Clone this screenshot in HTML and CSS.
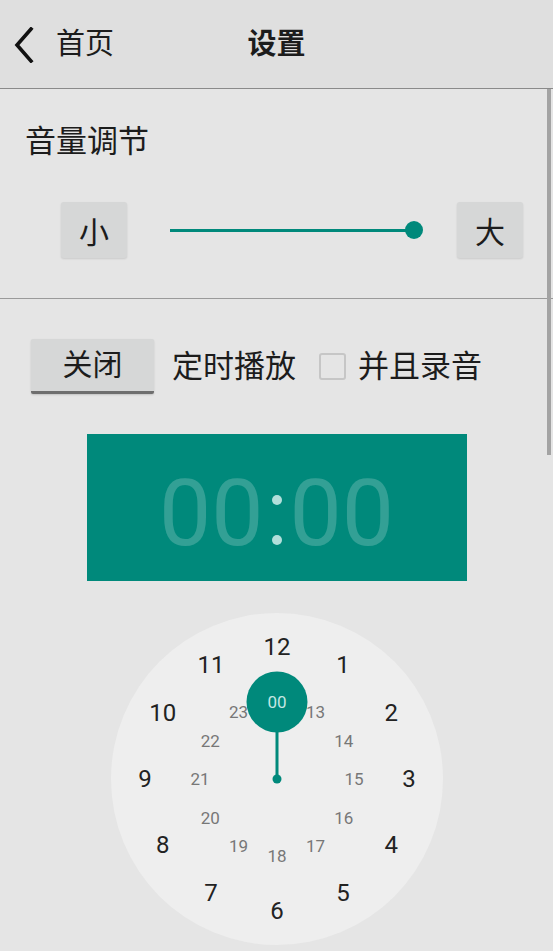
FILE: index.html
```html
<!DOCTYPE html>
<html lang="zh-CN">
<head>
  <meta charset="UTF-8">
  <meta name="viewport" content="width=device-width, initial-scale=1.0">
  <title>设置</title>
  <link rel="stylesheet" href="styles.css">
</head>
<body>
  <header class="toolbar">
    <div class="toolbar-left">
      <svg class="back-icon" width="20" height="36" viewBox="0 0 20 36">
        <path d="M17 2 L3 18 L17 34" fill="none" stroke="#111" stroke-width="3.6" stroke-linecap="square"/>
      </svg>
      <span class="back-label">首页</span>
    </div>
    <h1 class="toolbar-title">设置</h1>
    <div></div>
  </header>

  <section class="volume">
    <h2 class="section-title">音量调节</h2>
    <div class="volume-row">
      <button class="flat-btn">小</button>
      <div class="slider">
        <div class="slider-track"></div>
        <div class="slider-thumb"></div>
      </div>
      <button class="flat-btn">大</button>
    </div>
  </section>

  <section class="timer">
    <div class="timer-row">
      <button class="toggle-btn">关闭</button>
      <span class="row-label">定时播放</span>
      <span class="checkbox"></span>
      <span class="row-label">并且录音</span>
    </div>

    <div class="time-display">
      <span class="digits">00</span>
      <span class="colon"><i></i><i></i></span>
      <span class="digits">00</span>
    </div>

    <svg class="dial" width="332" height="332" viewBox="0 0 332 332">
      <circle cx="166" cy="166" r="166" fill="#eeeeee"/>
      <line x1="166" y1="166" x2="166" y2="115" stroke="#00897b" stroke-width="3"/>
      <circle cx="166" cy="166" r="4.5" fill="#00897b"/>
      <circle cx="166" cy="89" r="30.5" fill="#00897b"/>
      <g class="hour-outer">
        <text x="166" y="34">12</text>
        <text x="232" y="51.7">1</text>
        <text x="280.3" y="100">2</text>
        <text x="298" y="166">3</text>
        <text x="280.3" y="232">4</text>
        <text x="232" y="280.3">5</text>
        <text x="166" y="298">6</text>
        <text x="100" y="280.3">7</text>
        <text x="51.7" y="232">8</text>
        <text x="34" y="166">9</text>
        <text x="51.7" y="100">10</text>
        <text x="100" y="51.7">11</text>
      </g>
      <g class="hour-inner">
        <text x="204.5" y="99.3">13</text>
        <text x="232.7" y="127.5">14</text>
        <text x="243" y="166">15</text>
        <text x="232.7" y="204.5">16</text>
        <text x="204.5" y="232.7">17</text>
        <text x="166" y="243">18</text>
        <text x="127.5" y="232.7">19</text>
        <text x="99.3" y="204.5">20</text>
        <text x="89" y="166">21</text>
        <text x="99.3" y="127.5">22</text>
        <text x="127.5" y="99.3">23</text>
        <text class="selected" x="166" y="89">00</text>
      </g>
    </svg>
  </section>

  <div class="scroll-indicator"></div>
</body>
</html>
```

FILE: styles.css
```css
:root {
  --teal: #00897b;
  --bg: #e5e5e5;
  --bar-bg: #dfdfdf;
  --btn-bg: #d6d7d7;
  --text: #1c1c1c;
}

html, body {
  margin: 0;
  padding: 0;
  height: 951px;
  overflow: hidden;
}

body {
  position: relative;
  background-color: var(--bg);
  color: var(--text);
  font-family: Roboto, "Noto Sans CJK SC", sans-serif;
}

.toolbar {
  display: grid;
  grid-template-columns: 1fr auto 1fr;
  align-items: center;
  height: 88px;
  background-color: var(--bar-bg);
  border-bottom: 1px solid #8a8a8a;
}

.toolbar-left {
  display: flex;
  align-items: center;
  padding-left: 14px;
}

.back-icon {
  display: block;
  margin-top: 2px;
}

.back-label {
  margin-left: 22px;
  font-size: 29px;
  line-height: 36px;
}

.toolbar-title {
  margin: 0;
  font-size: 29px;
  font-weight: bold;
  line-height: 36px;
}

.volume {
  padding-top: 35px;
  padding-bottom: 40px;
  border-bottom: 1px solid #9a9a9a;
}

.section-title {
  margin: 0;
  padding-left: 25px;
  font-size: 31px;
  font-weight: normal;
  line-height: 36px;
}

.volume-row {
  display: flex;
  align-items: center;
  margin-top: 42px;
  padding: 0 30px 0 61px;
}

.flat-btn {
  width: 66px;
  height: 56px;
  padding: 0;
  border: none;
  border-radius: 3px;
  background-color: var(--btn-bg);
  box-shadow: 0 1px 2px rgba(0, 0, 0, 0.12);
  color: var(--text);
  font-family: inherit;
  font-size: 30px;
}

.slider {
  position: relative;
  flex: 1;
  margin: 0 43px;
  height: 20px;
  display: flex;
  align-items: center;
}

.slider-track {
  width: 100%;
  height: 3px;
  background-color: var(--teal);
}

.slider-thumb {
  position: absolute;
  right: -9px;
  top: 1px;
  width: 18px;
  height: 18px;
  border-radius: 50%;
  background-color: var(--teal);
}

.timer {
  padding-top: 40px;
}

.timer-row {
  display: flex;
  align-items: center;
  padding-left: 31px;
}

.toggle-btn {
  width: 123px;
  height: 55px;
  padding: 0;
  border: none;
  border-bottom: 3px solid #6e6e6e;
  border-radius: 2px;
  background-color: var(--btn-bg);
  box-shadow: 0 1px 2px rgba(0, 0, 0, 0.15);
  color: var(--text);
  font-family: inherit;
  font-size: 30px;
  line-height: 36px;
}

.row-label {
  font-size: 31px;
  line-height: 36px;
  margin-left: 18px;
}

.checkbox {
  box-sizing: border-box;
  width: 27px;
  height: 27px;
  margin-left: 23px;
  margin-right: -6px;
  border: 2px solid #c6c6c6;
  border-radius: 3px;
}

.time-display {
  display: flex;
  justify-content: center;
  align-items: center;
  box-sizing: border-box;
  width: 380px;
  height: 147px;
  margin: 40px auto 0;
  padding-top: 13px;
  background-color: var(--teal);
}

.digits {
  font-size: 93px;
  line-height: 96px;
  color: rgba(255, 255, 255, 0.2);
}

.colon {
  display: flex;
  flex-direction: column;
  align-items: center;
  gap: 30px;
  width: 26px;
  margin-top: 12px;
}

.colon i {
  width: 10px;
  height: 10px;
  border-radius: 50%;
  background-color: #b2dfdb;
}

.dial {
  display: block;
  margin: 32px auto 0;
}

.dial text {
  text-anchor: middle;
  dominant-baseline: central;
  font-family: Roboto, sans-serif;
}

.hour-outer text {
  font-size: 24px;
  fill: #222;
}

.hour-inner text {
  font-size: 17px;
  fill: #777;
}

.hour-inner text.selected {
  fill: #c4e6e2;
}

.scroll-indicator {
  position: absolute;
  top: 89px;
  right: 2px;
  width: 4px;
  height: 366px;
  background-color: #a3a3a3;
}
```
